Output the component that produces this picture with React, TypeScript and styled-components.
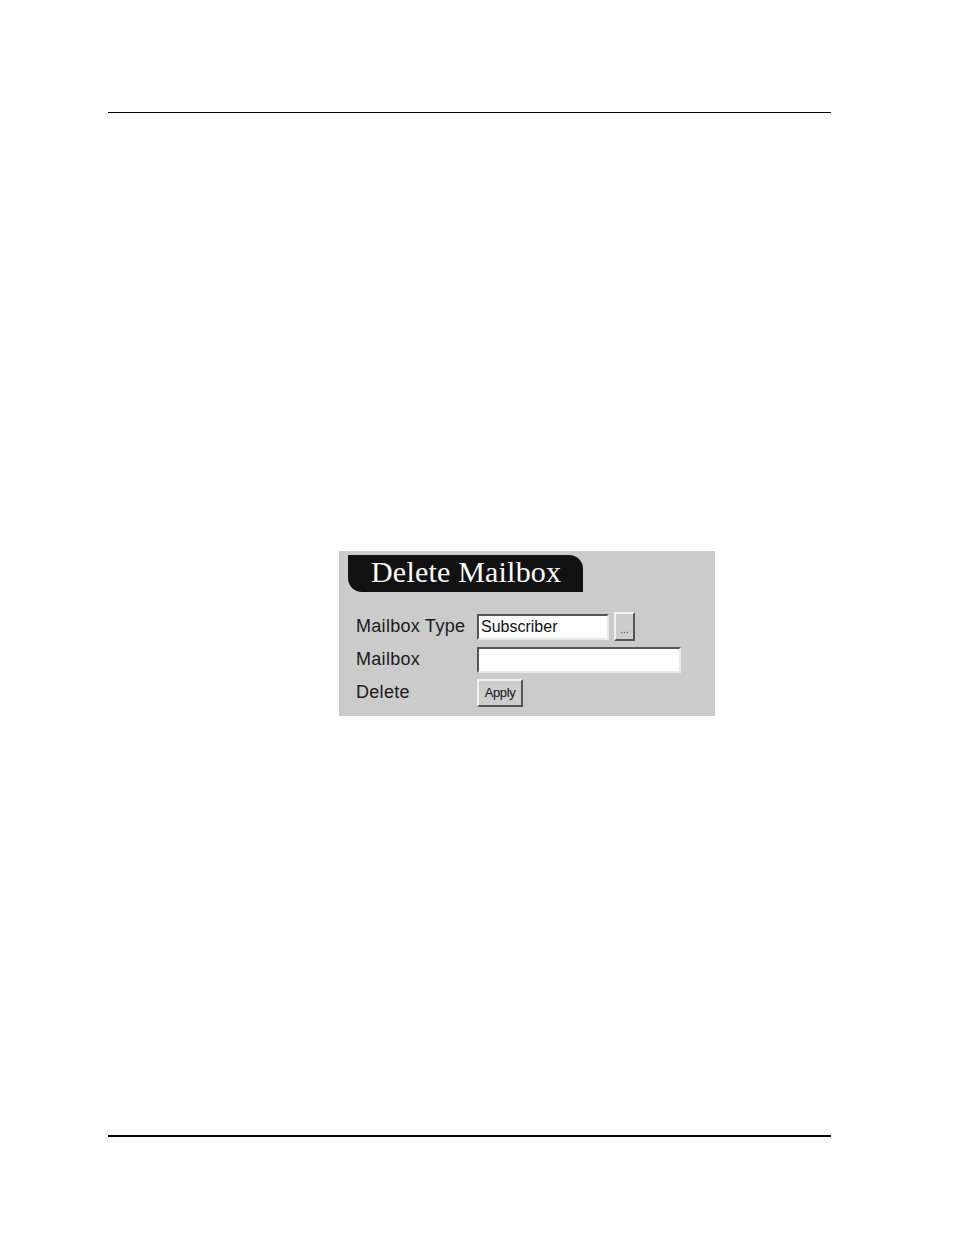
import styled, { createGlobalStyle } from "styled-components";

const GlobalStyle = createGlobalStyle`
  html, body {
    margin: 0;
    padding: 0;
    background: #ffffff;
  }
  body {
    font-family: "Liberation Sans", Arial, sans-serif;
  }
`;

const Page = styled.div`
  width: 954px;
  height: 1235px;
  padding-top: 112px;
  box-sizing: border-box;
  display: flex;
  flex-direction: column;
`;

const Rule = styled.hr<{ $thick?: boolean }>`
  margin: 0 123px 0 108px;
  border: 0;
  border-top: ${(p) => (p.$thick ? "2px" : "1px")} solid #000;
  height: 0;
`;

const Panel = styled.section`
  margin: 438px 0 0 339px;
  width: 376px;
  height: 165px;
  box-sizing: border-box;
  background: #cbcbcb;
  padding: 4px 0 0 9px;
`;

const Tab = styled.div`
  width: 235px;
  height: 37px;
  box-sizing: border-box;
  background: #111111;
  border-radius: 0 14px 0 14px;
  color: #ffffff;
  font-family: "Liberation Serif", "Times New Roman", serif;
  font-size: 30px;
  letter-spacing: 0.2px;
  line-height: 33px;
  padding-left: 23px;
  white-space: nowrap;
`;

const Form = styled.div`
  margin-top: 18px;
  padding-left: 8px;
  display: flex;
  flex-direction: column;
`;

const Row = styled.div`
  display: flex;
  align-items: center;
  height: 33px;
`;

const Label = styled.span`
  width: 121px;
  font-size: 18px;
  color: #1a1a1a;
  white-space: nowrap;
  letter-spacing: 0.3px;
`;

const Field = styled.div<{ $width: number }>`
  width: ${(p) => p.$width}px;
  height: 26px;
  box-sizing: border-box;
  background: #ffffff;
  border-style: solid;
  border-width: 2px;
  border-color: #555555 #e8e8e8 #e8e8e8 #555555;
  font-size: 16px;
  line-height: 22px;
  padding-left: 2px;
  color: #111;
  white-space: nowrap;
  overflow: hidden;
`;

const Button = styled.button<{ $width: number }>`
  width: ${(p) => p.$width}px;
  height: 29px;
  margin-left: ${(p) => (p.$width < 30 ? "5px" : "0")};
  box-sizing: border-box;
  background: #cdcdcd;
  border-style: solid;
  border-width: 2px;
  border-color: #f2f2f2 #555555 #555555 #f2f2f2;
  padding: 0;
  font-family: "Liberation Sans", Arial, sans-serif;
  font-size: 13px;
  letter-spacing: -0.4px;
  color: #111;
  display: flex;
  align-items: center;
  justify-content: center;
`;

const Dots = styled.span`
  font-size: 10px;
  letter-spacing: 0;
  color: #444;
  padding-top: 6px;
`;

export default function App() {
  return (
    <Page>
      <GlobalStyle />
      <Rule />
      <Panel>
        <Tab>Delete Mailbox</Tab>
        <Form>
          <Row>
            <Label>Mailbox Type</Label>
            <Field $width={132}>Subscriber</Field>
            <Button $width={21}>
              <Dots>...</Dots>
            </Button>
          </Row>
          <Row>
            <Label>Mailbox</Label>
            <Field $width={204} />
          </Row>
          <Row>
            <Label>Delete</Label>
            <Button $width={46} style={{ height: 28 }}>
              Apply
            </Button>
          </Row>
        </Form>
      </Panel>
      <Rule $thick style={{ marginTop: 419 }} />
    </Page>
  );
}
